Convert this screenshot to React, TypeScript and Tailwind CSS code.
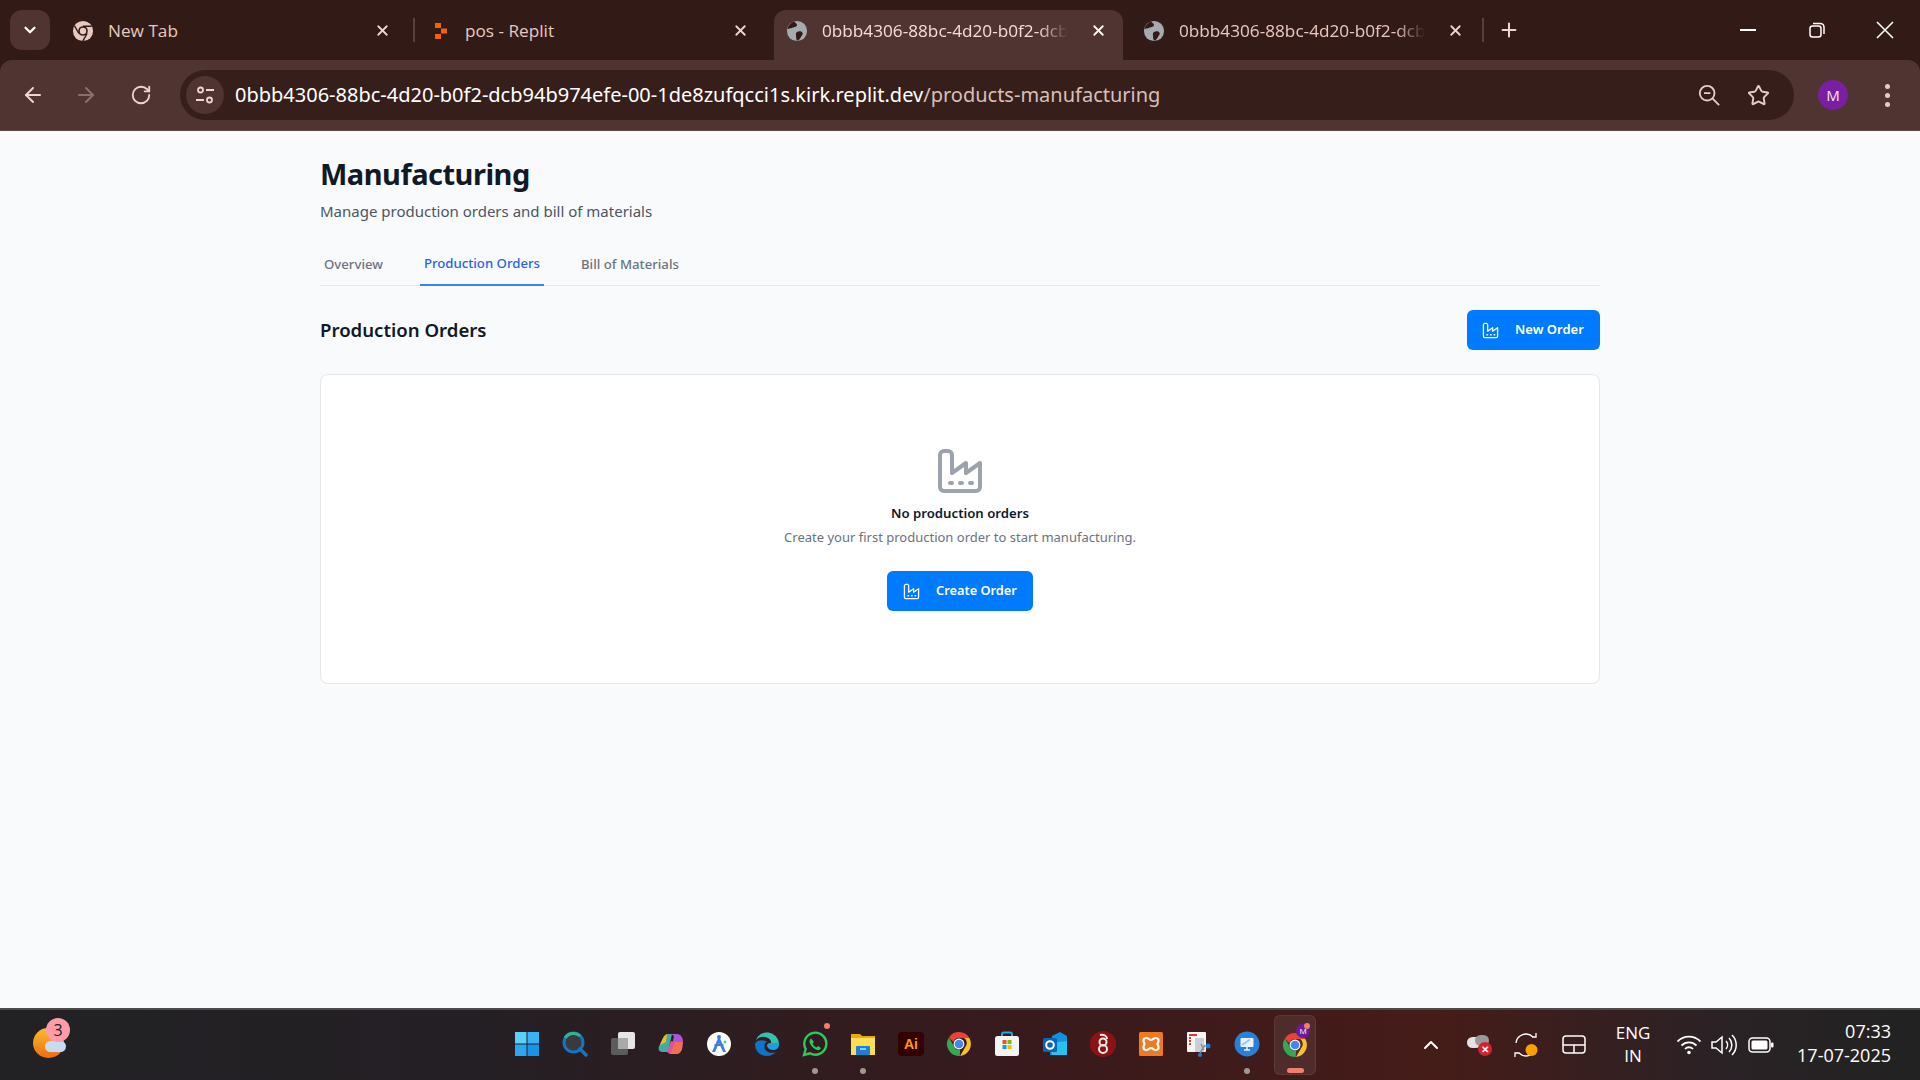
import { ArrowLeft, ArrowRight, RotateCw, X, Plus, Star, ChevronDown, ChevronUp } from "lucide-react";

const Factory = ({ size, strokeWidth, className = "" }: { size: number; strokeWidth: number; className?: string }) => (
  <svg width={size} height={size} viewBox="0 0 24 24" fill="none" stroke="currentColor" strokeWidth={strokeWidth} strokeLinecap="round" strokeLinejoin="round" className={`shrink-0 ${className}`}>
    <path d="M2 20a2 2 0 0 0 2 2h16a2 2 0 0 0 2-2V8l-7 5V8l-7 5V4a2 2 0 0 0-2-2H4a2 2 0 0 0-2 2Z" />
    <path d="M17 18h1" />
    <path d="M12 18h1" />
    <path d="M7 18h1" />
  </svg>
);

const Chrome = ({ size = 26, gray = false }: { size?: number; gray?: boolean }) => (
  <svg width={size} height={size} viewBox="0 0 48 48" className="shrink-0">
    {gray ? (
      <>
        <circle cx="24" cy="24" r="22" fill="#e8c9c0" />
        <circle cx="24" cy="24" r="10.500" fill="#321b17" />
        <circle cx="24" cy="24" r="7" fill="#e8c9c0" />
        <path d="M24 13.500h19M15 29.500L5.500 13M33 29.500L23.500 46" stroke="#321b17" strokeWidth="3" />
      </>
    ) : (
      <>
        <path d="M24 2a22 22 0 0 1 19 11H24a11 11 0 0 0-10.500 7.500L5.500 12A22 22 0 0 1 24 2z" fill="#ea4335" />
        <path d="M43 13a22 22 0 0 1-17 33l9.500-16.500A11 11 0 0 0 33.500 13z" fill="#fbc02d" />
        <path d="M5.500 12L15 28.500A11 11 0 0 0 26 35l-.5 11A22 22 0 0 1 5.500 12z" fill="#34a853" />
        <circle cx="24" cy="24" r="10" fill="#fff" />
        <circle cx="24" cy="24" r="8" fill="#4285f4" />
      </>
    )}
  </svg>
);

const Globe = () => (
  <svg width="22" height="22" viewBox="0 0 24 24" className="shrink-0">
    <circle cx="12" cy="12" r="11" fill="#a6abb0" />
    <path d="M9 1.500c1 2 3 2 3 4s-3 2-5 3-4 1-5.500 1C2.500 5.500 5.500 2.500 9 1.500zM12 13c2-1 5-1 6 1s-1 3-2 5-2 3-4 3.500c-1-2-1-3-1-5s-1-3 1-4.500z" fill="#321b17" />
  </svg>
);

const ReplitMark = () => (
  <svg width="18" height="20" viewBox="0 0 18 20" className="shrink-0">
    <path d="M2 2h6v5H2zM8 7.500h6v5H8zM2 13h6v5H2z" fill="#f26207" />
  </svg>
);

function Tab({ title, icon, active, fade, className, closeClass }: { title: string; icon: React.ReactNode; active?: boolean; fade?: boolean; className: string; closeClass: string }) {
  return (
    <div className={`relative flex items-center h-[50px] pb-[8px] mt-[10px] ${className} ${active ? "bg-[#503431] rounded-t-[12px]" : ""}`}>
      {icon}
      <span className={`ml-[14px] whitespace-nowrap text-[17.200px] leading-[24px] ${fade ? "[mask-image:linear-gradient(to_right,black_88%,transparent)]" : ""} ${active ? "text-[#f3dfd8]" : "text-[#e8c9c0]"}`}>
        {title}
      </span>
      <X size={17} strokeWidth={2.500} className={`absolute top-[12px] ${closeClass} ${active ? "text-white" : "text-[#f0d5cc]"}`} />
    </div>
  );
}

const Sep = ({ className = "" }: { className?: string }) => <div className={`w-[2px] h-[24px] mt-[18px] bg-[#5a403c] shrink-0 ${className}`} />;

function TopBar() {
  return (
    <div className="h-[131px] bg-[#321b17] shrink-0 flex flex-col font-['Open_Sans',sans-serif]">
      <div className="h-[60px] flex">
        <div className="w-[40px] h-[40px] ml-[10px] mt-[10px] rounded-[12px] bg-[#503431] flex items-center justify-center shrink-0">
          <ChevronDown size={18} strokeWidth={3} className="text-white" />
        </div>
        <Tab className="w-[353px] ml-[10px] pl-[12px]" closeClass="right-[22px]" icon={<Chrome gray size={22} />} title="New Tab" />
        <Sep />
        <Tab className="w-[349px] ml-[8px] pl-[10px]" closeClass="right-[23px]" icon={<ReplitMark />} title="pos - Replit" />
        <Tab className="w-[349px] ml-[2px] pl-[12px]" closeClass="right-[16px]" active fade icon={<Globe />} title="0bbb4306-88bc-4d20-b0f2-dcb" />
        <Tab className="w-[349px] ml-[12px] pl-[8px]" closeClass="right-[20px]" fade icon={<Globe />} title="0bbb4306-88bc-4d20-b0f2-dcb" />
        <Sep className="ml-[-2px]" />
        <div className="ml-[14px] mt-[19px] h-[22px]"><Plus size={22} strokeWidth={2.200} className="text-[#f0d5cc]" /></div>
        <div className="ml-auto flex h-[60px] items-center text-white">
          <div className="w-[68px] flex justify-center pr-[4px]"><div className="w-[16px] h-[2px] bg-white" /></div>
          <div className="w-[68px] flex justify-center pr-[2px]">
            <svg width="16" height="16" viewBox="0 0 16 16" fill="none" stroke="#fff" strokeWidth="1.500"><rect x="1" y="4" width="11" height="11" rx="2.500" /><path d="M4 1.500h7.500a3.500 3.500 0 0 1 3.500 3.500v7" /></svg>
          </div>
          <div className="w-[68px] flex justify-center pr-[2px]">
            <svg width="18" height="18" viewBox="0 0 18 18" stroke="#fff" strokeWidth="1.600"><path d="M1 1l16 16M17 1L1 17" /></svg>
          </div>
        </div>
      </div>
      <div className="flex-1 bg-[#503431] rounded-t-[12px] border-b border-[#5d4441] flex items-center">
        <div className="w-[180px] flex items-center shrink-0 text-[#f0d5cc]">
          <ArrowLeft size={24} strokeWidth={2} className="ml-[21px]" />
          <ArrowRight size={24} strokeWidth={2} className="ml-[29px] text-[#8a706c]" />
          <RotateCw size={22} strokeWidth={2} className="ml-[32px]" />
        </div>
        <div className="w-[1614px] h-[50px] rounded-full bg-[#361f1b] flex items-center pl-[6px] pr-[24px]">
          <div className="w-[38px] h-[38px] rounded-full bg-[#503431] flex items-center justify-center shrink-0">
            <svg width="20" height="20" viewBox="0 0 20 20" fill="none" stroke="#f0d5cc" strokeWidth="1.800"><circle cx="5.500" cy="5" r="2.500" /><path d="M11 5h8M1 15h8" /><circle cx="14.500" cy="15" r="2.500" /></svg>
          </div>
          <div className="ml-[11px] text-[20px] whitespace-nowrap text-white font-['Noto_Sans',sans-serif]">
            0bbb4306-88bc-4d20-b0f2-dcb94b974efe-00-1de8zufqcci1s.kirk.replit.dev<span className="text-[#d9bfb8]">/products-manufacturing</span>
          </div>
          <div className="ml-auto flex items-center gap-[27px]">
            <svg width="22" height="22" viewBox="0 0 24 24" fill="none" stroke="#e3cfc9" strokeWidth="2"><circle cx="10" cy="10" r="8" /><path d="M6.500 10h7M16 16l7 7" /></svg>
            <Star size={23} strokeWidth={2} className="text-[#e3cfc9]" />
          </div>
        </div>
        <div className="w-[30px] h-[30px] ml-[24px] rounded-full bg-[#7b1fa2] flex items-center justify-center text-[15px] text-[#f3dfd8] shrink-0 font-['Noto_Sans',sans-serif]">M</div>
        <div className="ml-[37px] flex flex-col gap-[4px]">
          <div className="w-[5px] h-[5px] rounded-full bg-[#f0c9bd]" />
          <div className="w-[5px] h-[5px] rounded-full bg-[#f0c9bd]" />
          <div className="w-[5px] h-[5px] rounded-full bg-[#f0c9bd]" />
        </div>
      </div>
    </div>
  );
}

function Main() {
  return (
    <main className="flex-1 bg-[#f9fafb] font-['Noto_Sans',sans-serif]">
      <div className="w-[1280px] mx-auto pt-[24px]">
        <h1 className="text-[29px] leading-[38px] font-bold text-[#111827] tracking-[-0.5px]">Manufacturing</h1>
        <p className="mt-[6px] text-[15px] leading-[24px] text-[#4b5563]">Manage production orders and bill of materials</p>
        <div className="mt-[19px] h-[44px] border-b border-[#e5e7eb] flex gap-[33px] text-[13.200px] font-medium text-[#6b7280]">
          <div className="px-[4px] pt-[2px] h-[44px] flex items-center">Overview</div>
          <div className="px-[4px] pt-[2px] h-[44px] flex items-center text-[#2563eb] border-b-2 border-[#3b82f6]">Production Orders</div>
          <div className="px-[4px] pt-[2px] h-[44px] flex items-center">Bill of Materials</div>
        </div>
        <div className="mt-[24px] flex items-center justify-between h-[40px]">
          <h2 className="text-[18.600px] font-semibold text-[#111827]">Production Orders</h2>
          <button className="w-[133px] h-[40px] rounded-[6px] bg-[#007bff] text-white text-[13px] font-semibold flex items-center pl-[15px]">
            <Factory size={17} strokeWidth={1.800} />
            <span className="ml-[16px]">New Order</span>
          </button>
        </div>
        <div className="mt-[24px] h-[310px] bg-white border border-[#e5e7eb] rounded-[8px] flex flex-col items-center pt-[72px]">
          <Factory size={48} strokeWidth={2} className="text-[#9ca3af]" />
          <h3 className="mt-[8px] text-[13.200px] leading-[20px] font-semibold text-[#111827]">No production orders</h3>
          <p className="mt-[4px] text-[13px] leading-[20px] text-[#6b7280]">Create your first production order to start manufacturing.</p>
          <button className="mt-[24px] w-[146px] h-[40px] rounded-[6px] bg-[#007bff] text-white text-[12.800px] font-semibold flex items-center pl-[16px]">
            <Factory size={17} strokeWidth={1.800} />
            <span className="ml-[16px]">Create Order</span>
          </button>
        </div>
      </div>
    </main>
  );
}

const S = ({ children, size = 26 }: { children: React.ReactNode; size?: number }) => (
  <svg width={size} height={size} viewBox="0 0 26 26">{children}</svg>
);

const apps: { el: React.ReactNode; dot?: boolean; badge?: boolean; active?: boolean }[] = [
  { el: <S><path d="M1 1h11.500v11.500H1z" fill="#5cd0fb" /><path d="M13.500 1H25v11.500H13.500z" fill="#36b4f5" /><path d="M1 13.500h11.500V25H1z" fill="#2ba6f0" /><path d="M13.500 13.500H25V25H13.500z" fill="#1793ea" /></S> },
  { el: <S><circle cx="11.500" cy="11.500" r="9.500" fill="#3a3a3e" stroke="#1675c0" strokeWidth="3" /><path d="M3 7a10 10 0 0 1 15-2" stroke="#38b28e" strokeWidth="3" fill="none" /><path d="M18 18l6 6" stroke="#1675c0" strokeWidth="3.500" strokeLinecap="round" /></S> },
  { el: <S><rect x="1" y="7" width="17" height="17" rx="2" fill="#5c5c5c" /><rect x="8" y="1" width="17" height="17" rx="2" fill="#e6e6e6" /><rect x="8" y="7" width="10" height="11" fill="#a9a9a9" /></S> },
  { el: <S><path d="M9 3h5l-4 18H4C1 21 0 18 1 15z" fill="#3dafa0" /><path d="M9 3c-3 1-5 5-7 11l6-3z" fill="#f2b632" /><path d="M13 3h6c3 0 5 2 6 6l-1 9c-1 3-3 5-6 5h-6l4-18z" fill="#ad55d8" /><path d="M12 23l5-12h8l-1 7c-1 3-3 5-6 5z" fill="#f27052" /><path d="M9 21l4-11 4 1-5 12z" fill="#e84fa0" /></S> },
  { el: <S><circle cx="13" cy="13" r="12" fill="#fff" /><path d="M13 5l7 16h-3l-4-9-4 9H6z" fill="#3d7de0" /><path d="M8.500 14h9" stroke="#3d7de0" strokeWidth="2" /><circle cx="13" cy="6" r="2" fill="#3d7de0" /><circle cx="19" cy="11" r="1.500" fill="#3ddc84" /></S> },
  { el: <S><path d="M25 13A12 12 0 0 0 1.500 10C4 6 9 5 13 6.500c4 1.500 5 5 3.500 7H25z" fill="#35c1b1" /><path d="M1 13c0 7 5 12 12 12 4 0 7-2 9-4-3 1.500-7 1-9.500-1-3-2.500-3-8 1-9.500C8 8 2 9 1 13z" fill="#1173c6" /><path d="M25 14c0 3-3 5-6 5-2 0-5-1-6-4 0-2 1-3 3-3h9z" fill="#1c9fe0" /></S> },
  { dot: true, badge: true, el: <S><path d="M2 24l1.700-6A11 11 0 1 1 8 22.300z" fill="none" stroke="#2ec95c" strokeWidth="2.400" /><path d="M9 7.500c-1.500 1-2 3-1 5 1.500 3 4 5.500 7 6.500 2 .500 3.500-.500 4-2l-3-2-1.500 1.500c-2-1-3-2-4-4L12 11z" fill="#2ec95c" /></S> },
  { dot: true, el: <S><path d="M1 3h9l2 2h13v19H1z" fill="#e8aa14" /><path d="M1 7h24v17H1z" fill="#ffdd55" /><rect x="6" y="15" width="14" height="9" rx="1" fill="#1683d8" /><path d="M10 18h6" stroke="#b8e0ff" strokeWidth="1.500" /></S> },
  { el: <div className="w-[26px] h-[24px] rounded-[4px] bg-[#330000] text-[#ff9a00] text-[14px] font-bold flex items-center justify-center font-['Liberation_Sans',sans-serif]">Ai</div> },
  { el: <Chrome /> },
  { el: <S><path d="M8 6V3.500a2 2 0 0 1 2-2h6a2 2 0 0 1 2 2V6" fill="none" stroke="#25a7e6" strokeWidth="2" /><rect x="1" y="5" width="24" height="20" rx="2.500" fill="#f4f4f4" /><rect x="8.500" y="9" width="4" height="4" fill="#f25022" /><rect x="13.500" y="9" width="4" height="4" fill="#7fba00" /><rect x="8.500" y="14" width="4" height="4" fill="#00a4ef" /><rect x="13.500" y="14" width="4" height="4" fill="#ffb900" /></S> },
  { el: <S><path d="M10 5l8-4 7 4v19H8z" fill="#1490df" /><path d="M8 12l17-2v14H10z" fill="#28c2f0" /><rect x="1" y="7" width="14" height="14" rx="1.500" fill="#0a64b8" /><circle cx="8" cy="14" r="3.800" fill="none" stroke="#fff" strokeWidth="2" /></S> },
  { el: <div className="w-[26px] h-[26px] rounded-full bg-[#8a1414] flex items-center justify-center"><svg width="14" height="22" viewBox="0 0 14 22" fill="none" stroke="#fbe9e9" strokeWidth="2"><circle cx="7" cy="9" r="3.500" /><circle cx="7" cy="16" r="4" /><path d="M4 2c4-1 7 1 7 4" /></svg></div> },
  { el: <S><rect x="1" y="1" width="24" height="24" rx="1.500" fill="#f07a22" /><path d="M8 7c3 0 3 2 5 2s2-2 5-2 3 3 1.500 6c1.500 3 1.500 6-1.500 6s-3-2-5-2-2 2-5 2-3-3-1.500-6C5 10 5 7 8 7z" fill="none" stroke="#fff" strokeWidth="2.200" /></S> },
  { el: <S><rect x="1" y="1" width="19" height="20" rx="1" fill="#f5f5f5" /><path d="M3 3h8v2H3zM3 6h2v2H3zM3 9h2v2H3zM3 12h2v2H3z" fill="#d83b2b" /><rect x="9" y="7" width="9" height="14" fill="#c9ced6" /><path d="M15 13l3 6M19 14l-5 8" stroke="#8a8f96" strokeWidth="1.500" /><circle cx="22" cy="15" r="2.500" fill="#1c7fd0" /><circle cx="14" cy="24" r="2" fill="#1c7fd0" /></S> },
  { dot: true, el: <S><circle cx="13" cy="13" r="12.500" fill="#2a7fd6" /><rect x="6.500" y="7" width="13" height="9" rx="1" fill="#e8f3fc" /><path d="M8 14l8-5.500" stroke="#9cc7ee" strokeWidth="2" /><path d="M10 19h6M13 16v3" stroke="#e8f3fc" strokeWidth="1.500" /></S> },
];

function Taskbar() {
  return (
    <footer className="h-[72px] shrink-0 border-t-2 border-[#4c4a4b] bg-[linear-gradient(90deg,#222225_0%,#241f24_25%,#3a1a1c_55%,#451c18_75%,#2a2226_90%,#222222_100%)] text-white font-['Open_Sans',sans-serif] flex">
      <div className="w-[503px] shrink-0 flex">
        <div className="relative ml-[33px] mt-[18px] w-[32px] h-[32px]">
          <div className="w-[31px] h-[30px] rounded-full bg-gradient-to-b from-[#f6bd2e] to-[#ee6a0f]" />
          <div className="absolute left-[12px] top-[13px] w-[21px] h-[11px] rounded-full bg-[#c6dcf5]" />
          <div className="absolute left-[13px] top-[-10px] w-[24px] h-[24px] rounded-full bg-[#ff9ca8] text-[#222] text-[16px] flex items-center justify-center">3</div>
        </div>
      </div>
      {apps.map((a, i) => (
        <div key={i} className="relative w-[48px] h-[68px] flex items-center justify-center">
          {a.el}
          {a.badge && <div className="absolute top-[13px] right-[9px] w-[6px] h-[6px] rounded-full bg-[#f0806e]" />}
          {a.dot && <div className="absolute bottom-[4px] left-[21px] w-[6px] h-[6px] rounded-full bg-[#9a9a9a]" />}
        </div>
      ))}
      <div className="relative w-[42px] h-[60px] mt-[5px] ml-[3px] rounded-[6px] bg-[#ffffff14] border border-[#ffffff12] flex items-center justify-center">
        <Chrome />
        <div className="absolute top-[8px] left-[21px] w-[14px] h-[14px] rounded-full bg-[#6a1b9a] text-[8px] flex items-center justify-center">M</div>
        <div className="absolute top-[7px] right-[5px] w-[6px] h-[6px] rounded-full bg-[#f0806e]" />
        <div className="absolute bottom-[1px] left-[12px] w-[17px] h-[5px] rounded-full bg-[#f0806e]" />
      </div>
      <div className="flex-1 flex items-center pl-[104px]">
        <ChevronUp size={24} strokeWidth={2} className="ml-[-1px]" />
        <div className="relative ml-[24px] w-[26px] h-[24px]">
          <div className="absolute left-0 top-[4px] w-[14px] h-[11px] rounded-full bg-[#e3e3e3]" />
          <div className="absolute left-[8px] top-[2px] w-[14px] h-[11px] rounded-full bg-[#999]" />
          <div className="absolute left-[11px] top-[9px] w-[14px] h-[14px] rounded-full bg-[#d5202e] text-[10px] font-bold flex items-center justify-center leading-none">✕</div>
        </div>
        <svg width="26" height="26" viewBox="0 0 26 26" fill="none" stroke="#fff" strokeWidth="1.300" className="ml-[20px]">
          <path d="M3 11a10 10 0 0 1 17-6h3M23 1v4h-4M23 15a10 10 0 0 1-17 6H2M2 25v-4h4" />
          <circle cx="18.500" cy="18" r="6" fill="#ffa000" stroke="none" />
        </svg>
        <svg width="24" height="20" viewBox="0 0 24 20" fill="none" stroke="#fff" strokeWidth="1.500" className="ml-[23px]"><rect x="1" y="1" width="22" height="17" rx="3" /><path d="M1 10h22M12 10v8" /></svg>
        <div className="ml-[27px] pb-[2px] w-[40px] text-center text-[17px] leading-[23px]">ENG<br />IN</div>
        <svg width="26" height="22" viewBox="0 0 26 22" fill="none" stroke="#fff" strokeWidth="1.800" className="ml-[23px]"><path d="M1.500 7.500a16 16 0 0 1 23 0M5.500 11.500a10.500 10.500 0 0 1 15 0M9 15a5.500 5.500 0 0 1 8 0" /><circle cx="13" cy="18.500" r="1.800" fill="#fff" stroke="none" /></svg>
        <svg width="26" height="24" viewBox="0 0 26 24" fill="none" stroke="#fff" strokeWidth="1.500" className="ml-[9px]"><path d="M1 9v6h4l6 5V4L5 9zM15 8a6 6 0 0 1 0 8M18 5a10 10 0 0 1 0 14M21 2a14 14 0 0 1 0 20" /></svg>
        <svg width="26" height="18" viewBox="0 0 26 18" className="ml-[11px]" fill="none"><rect x="1" y="2" width="21" height="14" rx="3.500" stroke="#fff" strokeWidth="1.500" /><rect x="3.500" y="4.500" width="16" height="9" rx="1.500" fill="#fff" /><rect x="23" y="6.500" width="2.500" height="5" rx="1" fill="#fff" /></svg>
        <div className="ml-auto pr-[29px] pb-[4px] text-right text-[18px] leading-[24px]">07:33<br />17-07-2025</div>
      </div>
    </footer>
  );
}

export default function App() {
  return (
    <div className="w-[1920px] h-[1080px] flex flex-col overflow-hidden">
      <TopBar />
      <Main />
      <Taskbar />
    </div>
  );
}
